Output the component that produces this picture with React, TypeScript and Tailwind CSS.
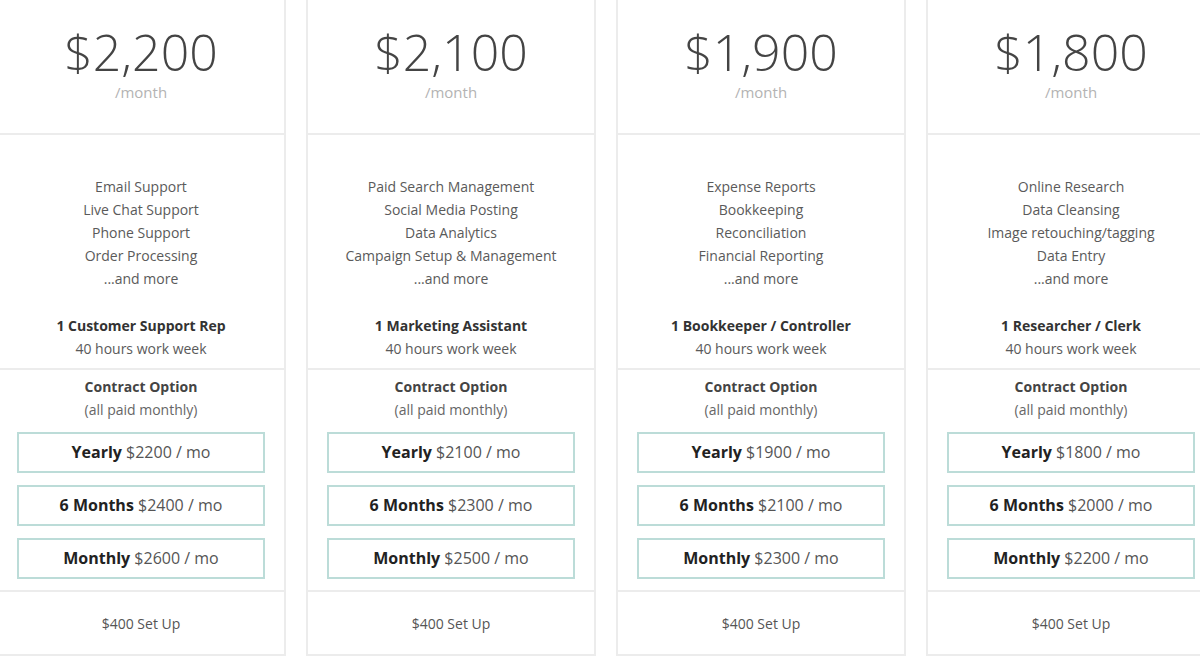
import React from "react";

type Plan = {
  price: string;
  features: string[];
  role: string;
  yearly: string;
  six: string;
  monthly: string;
};

const plans: Plan[] = [
  {
    price: "$2,200",
    features: ["Email Support", "Live Chat Support", "Phone Support", "Order Processing", "...and more"],
    role: "1 Customer Support Rep",
    yearly: "$2200",
    six: "$2400",
    monthly: "$2600",
  },
  {
    price: "$2,100",
    features: ["Paid Search Management", "Social Media Posting", "Data Analytics", "Campaign Setup & Management", "...and more"],
    role: "1 Marketing Assistant",
    yearly: "$2100",
    six: "$2300",
    monthly: "$2500",
  },
  {
    price: "$1,900",
    features: ["Expense Reports", "Bookkeeping", "Reconciliation", "Financial Reporting", "...and more"],
    role: "1 Bookkeeper / Controller",
    yearly: "$1900",
    six: "$2100",
    monthly: "$2300",
  },
  {
    price: "$1,800",
    features: ["Online Research", "Data Cleansing", "Image retouching/tagging", "Data Entry", "...and more"],
    role: "1 Researcher / Clerk",
    yearly: "$1800",
    six: "$2000",
    monthly: "$2200",
  },
];

function Option({ label, price }: { label: string; price: string }) {
  return (
    <div className="h-[41px] border-2 border-[#bcdcd8] flex items-center justify-center text-[16px] text-[#555]">
      <span className="font-bold text-[#222]">{label}</span>
      <span>&nbsp;{price} / mo</span>
    </div>
  );
}

function Card({ plan }: { plan: Plan }) {
  return (
    <div className="w-[290px] shrink-0 border-x-2 border-[#ececec] flex flex-col text-center">
      <div className="h-[135px] border-b-2 border-[#ececec] pt-[27px]">
        <div className="text-[50px] leading-[50px] font-light text-[#444]">{plan.price}</div>
        <div className="mt-[5px] text-[15px] leading-[20px] text-[#b3b3b3]">/month</div>
      </div>
      <div className="h-[235px] border-b-2 border-[#ececec] pt-[40px] text-[14px] leading-[23px] text-[#5a5a5a]">
        {plan.features.map((f) => (
          <div key={f}>{f}</div>
        ))}
        <div className="mt-[24px] font-bold text-[#333]">{plan.role}</div>
        <div>40 hours work week</div>
      </div>
      <div className="h-[222px] border-b-2 border-[#ececec] pt-[5px] px-[19px] text-[14px] leading-[23px]">
        <div className="font-bold text-[#444]">Contract Option</div>
        <div className="text-[#666]">(all paid monthly)</div>
        <div className="mt-[11px] flex flex-col gap-[12px]">
          <Option label="Yearly" price={plan.yearly} />
          <Option label="6 Months" price={plan.six} />
          <Option label="Monthly" price={plan.monthly} />
        </div>
      </div>
      <div className="h-[64px] border-b-2 border-[#ececec] flex items-center justify-center text-[14px] text-[#555]">
        $400 Set Up
      </div>
    </div>
  );
}

export default function App() {
  return (
    <div
      className="w-[1200px] h-[656px] overflow-hidden bg-white"
      style={{ fontFamily: '"Open Sans", "Noto Sans", sans-serif' }}
    >
      <div className="flex gap-[20px] ml-[-4px]">
        {plans.map((p) => (
          <Card key={p.price} plan={p} />
        ))}
      </div>
    </div>
  );
}
